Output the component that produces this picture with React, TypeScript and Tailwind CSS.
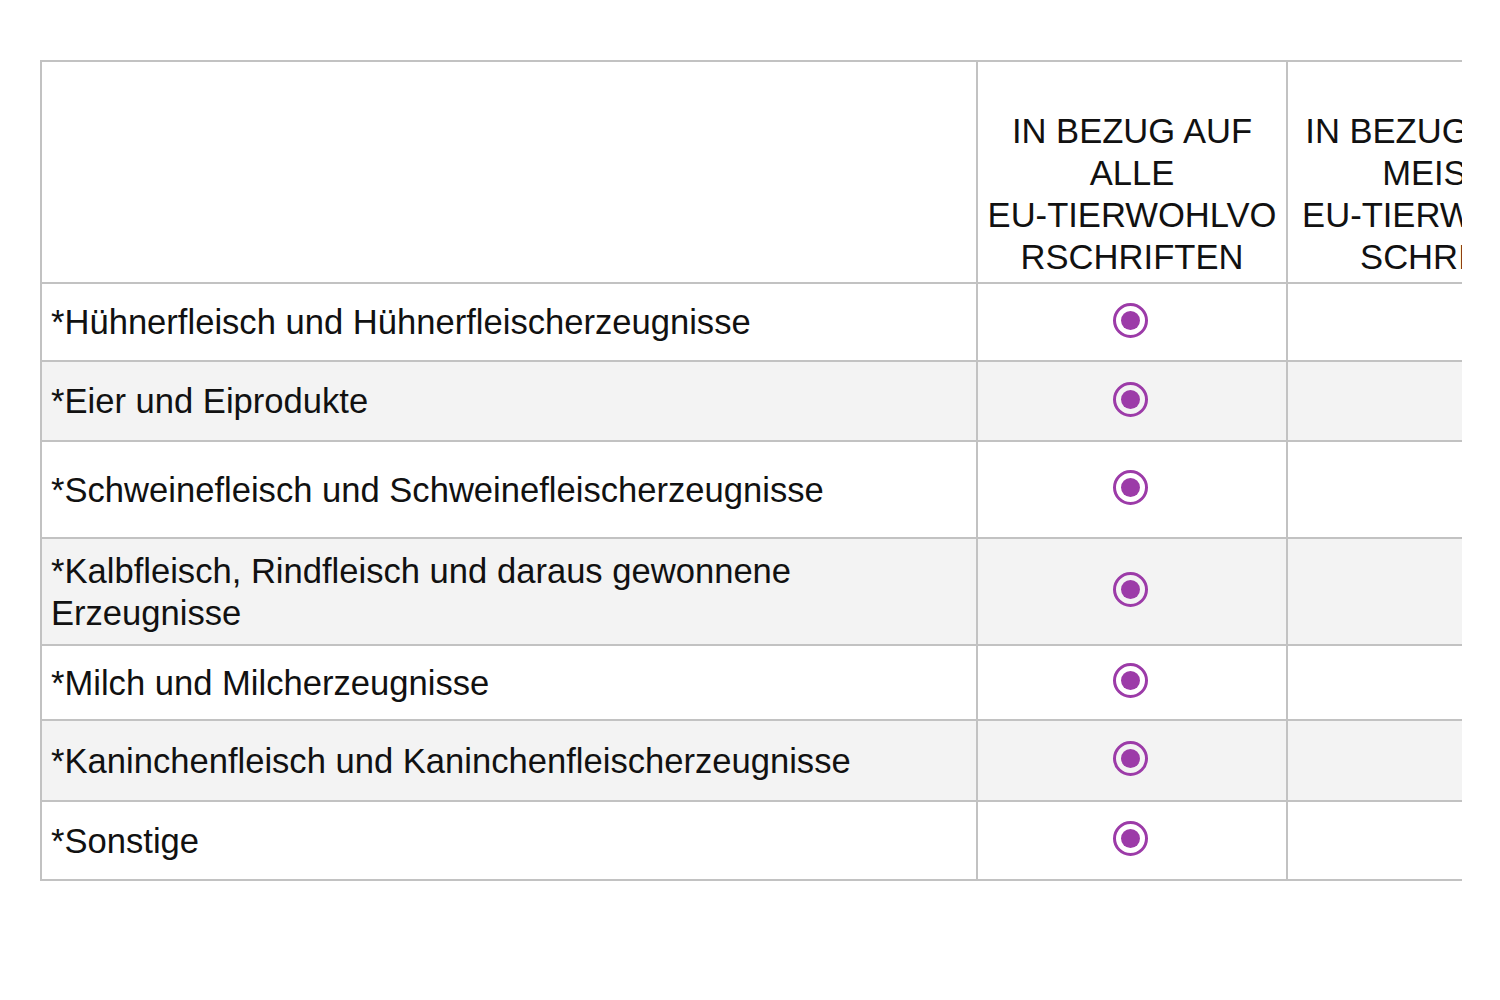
const ROWS = [
  { label: '*Hühnerfleisch und Hühnerfleischerzeugnisse', h: 'h-[78px]' },
  { label: '*Eier und Eiprodukte', h: 'h-[80px]' },
  { label: '*Schweinefleisch und Schweinefleischerzeugnisse', h: 'h-[97px]' },
  { label: '*Kalbfleisch, Rindfleisch und daraus gewonnene Erzeugnisse', h: 'h-[107px]' },
  { label: '*Milch und Milcherzeugnisse', h: 'h-[75px]' },
  { label: '*Kaninchenfleisch und Kaninchenfleischerzeugnisse', h: 'h-[81px]' },
  { label: '*Sonstige', h: 'h-[79px]' },
]

function Radio() {
  return (
    <span className="inline-flex h-[35px] w-[35px] items-center justify-center rounded-full border-[3px] border-[#9c3ba8]">
      <span className="h-[19px] w-[19px] rounded-full bg-[#9c3ba8]" />
    </span>
  )
}

export default function App() {
  return (
    <div className="min-h-[1000px] w-[1500px] bg-white pt-[60px] pl-[40px] font-['Liberation_Sans',Arial,sans-serif] text-[#111]">
      <div className="w-[1422px] overflow-hidden">
        <table className="w-[1590px] table-fixed border-collapse text-[34.6px] leading-[42px]">
          <colgroup>
            <col className="w-[936px]" />
            <col className="w-[310px]" />
            <col className="w-[344px]" />
          </colgroup>
          <thead>
            <tr className="h-[222px]">
              <th className="border-2 border-[#c2c2c2] bg-white" />
              <th className="border-2 border-[#c2c2c2] bg-white px-1 pb-1 align-bottom font-normal text-center">
                IN BEZUG AUF
                <br />
                ALLE
                <br />
                EU-TIERWOHLVO
                <br />
                RSCHRIFTEN
              </th>
              <th className="border-2 border-[#c2c2c2] bg-white px-1 pb-1 align-bottom font-normal text-center">
                IN BEZUG AUF DIE
                <br />
                MEISTEN
                <br />
                EU-TIERWOHLVOR
                <br />
                SCHRIFTEN
              </th>
            </tr>
          </thead>
          <tbody>
            {ROWS.map((row, i) => (
              <tr key={row.label} className={`${row.h} ${i % 2 === 1 ? 'bg-[#f3f3f3]' : 'bg-white'}`}>
                <td className="border-2 border-[#c2c2c2] py-0 pl-[9px] pr-2 align-middle">
                  {row.label.includes('daraus') ? (
                    <>
                      *Kalbfleisch, Rindfleisch und daraus gewonnene
                      <br />
                      Erzeugnisse
                    </>
                  ) : (
                    row.label
                  )}
                </td>
                <td className="border-2 border-[#c2c2c2] text-center align-middle">
                  <div className="-mt-1 flex justify-center pr-[3px]">
                    <Radio />
                  </div>
                </td>
                <td className="border-2 border-[#c2c2c2]" />
              </tr>
            ))}
          </tbody>
        </table>
      </div>
    </div>
  )
}
